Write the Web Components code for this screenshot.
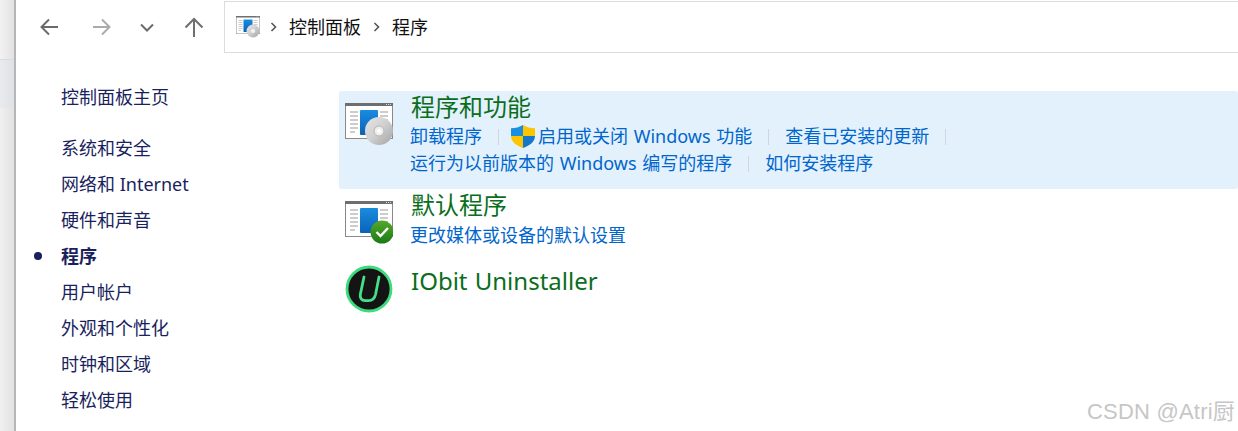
<!DOCTYPE html>
<html lang="zh">
<head>
<meta charset="utf-8">
<title>程序</title>
<style>
  html, body { margin: 0; height: 100%; background: #fff; overflow: hidden; }
  body { font-family: "Noto Sans", "Noto Sans CJK SC", sans-serif; }
</style>
</head>
<body>
<cp-window>
  <cp-toolbar slot="toolbar"></cp-toolbar>
  <cp-sidebar slot="sidebar">
    <cp-side-link class="home">控制面板主页</cp-side-link>
    <cp-side-link>系统和安全</cp-side-link>
    <cp-side-link>网络和 Internet</cp-side-link>
    <cp-side-link>硬件和声音</cp-side-link>
    <cp-side-link current>程序</cp-side-link>
    <cp-side-link>用户帐户</cp-side-link>
    <cp-side-link>外观和个性化</cp-side-link>
    <cp-side-link>时钟和区域</cp-side-link>
    <cp-side-link>轻松使用</cp-side-link>
  </cp-sidebar>
  <cp-task hot heading="程序和功能" style="--icon-top:12px;--pad-bottom:12px">
    <cp-icon slot="icon" name="disc"></cp-icon>
    <div class="links">
      <cp-task-link sep>卸载程序</cp-task-link>
      <cp-task-link sep shield>启用或关闭 Windows 功能</cp-task-link>
      <cp-task-link sep>查看已安装的更新</cp-task-link>
    </div>
    <div class="links">
      <cp-task-link sep>运行为以前版本的 Windows 编写的程序</cp-task-link>
      <cp-task-link>如何安装程序</cp-task-link>
    </div>
  </cp-task>
  <cp-task heading="默认程序" style="--icon-top:12px;--pad-bottom:15px;--links-top:1px">
    <cp-icon slot="icon" name="check"></cp-icon>
    <div class="links"><cp-task-link>更改媒体或设备的默认设置</cp-task-link></div>
  </cp-task>
  <cp-task heading="IObit Uninstaller" style="--icon-top:1px;--text-top:1px;--pad-bottom:16px">
    <cp-icon slot="icon" name="iobit"></cp-icon>
  </cp-task>
  <span slot="mark">CSDN @Atri厨</span>
</cp-window>

<script>
const WINDOW_ART = `
  <rect x="0.5" y="0.5" width="47" height="35" fill="#fff" stroke="#8a8a8a"/>
  <rect x="0" y="0" width="48" height="3" fill="#6e6e6e"/>
  <path d="M41 1.500h1M43 1.500h1M45 1.500h1" stroke="#ddd"/>
  <path d="M5 9h8M5 13h8M5 17h8M5 21h8M5 25h8M5 29h5M35 9h8M35 13h8M35 17h8M35 21h8" stroke="#9a9a9a"/>
  <rect x="15" y="7" width="18" height="25" rx="1" fill="url(#blue)"/>`;

const BLUE = `<linearGradient id="blue" x1="0" y1="0" x2="0" y2="1"><stop offset="0" stop-color="#1a8ce0"/><stop offset="1" stop-color="#0a62b8"/></linearGradient>`;
const CD = `<linearGradient id="cd" x1="0" y1="0" x2="1" y2="1"><stop offset="0" stop-color="#e6e6e6"/><stop offset="0.5" stop-color="#cfcfcf"/><stop offset="1" stop-color="#a2a2a2"/></linearGradient>`;

const ICONS = {
  disc: `<svg width="48" height="44" viewBox="0 0 48 44">
    <defs>${BLUE}${CD}</defs>
    ${WINDOW_ART}
    <circle cx="34" cy="28" r="14" fill="url(#cd)"/>
    <circle cx="34" cy="28" r="5" fill="#eee" stroke="#b5b5b5"/>
    <circle cx="34" cy="28" r="2" fill="#fff"/>
  </svg>`,
  check: `<svg width="48" height="44" viewBox="0 0 48 44">
    <defs>${BLUE}
      <linearGradient id="ok" x1="0" y1="0" x2="0" y2="1"><stop offset="0" stop-color="#55a82a"/><stop offset="1" stop-color="#1b7a14"/></linearGradient>
    </defs>
    ${WINDOW_ART}
    <circle cx="37" cy="31" r="11.500" fill="url(#ok)"/>
    <path d="M31.500 31l4 4 7.500-8" fill="none" stroke="#fff" stroke-width="2.400"/>
  </svg>`,
  iobit: `<svg width="48" height="48" viewBox="0 0 48 48">
    <circle cx="24" cy="24" r="22" fill="#141414" stroke="#3edb7e" stroke-width="2.800"/>
    <path d="M19 12l-3.600 17c-.9 4.400 1.200 6.600 4.800 6.600h3.400c3.600 0 6-2 7-6.400L34 12" fill="none" stroke="#45e088" stroke-width="2.800" stroke-linecap="round"/>
  </svg>`,
  shield: `<svg width="24" height="23" viewBox="1 0 22 23" preserveAspectRatio="none">
    <path d="M12 0C9 2 5 3.300 1 3.300V11h11z" fill="#1a8fe0"/>
    <path d="M12 0c3 2 7 3.300 11 3.300V11H12z" fill="#fdc400"/>
    <path d="M1 11c0 5.500 4.500 9.500 11 12V11z" fill="#fdc400"/>
    <path d="M23 11c0 5.500-4.500 9.500-11 12V11z" fill="#1378c9"/>
  </svg>`
};

class CpIcon extends HTMLElement {
  connectedCallback() {
    this.attachShadow({ mode: 'open' });
    this.shadowRoot.innerHTML = `
      <style>
        :host { display: block; line-height: 0; }
      </style>
      ${ICONS[this.getAttribute('name')]}`;
  }
}

class CpWindow extends HTMLElement {
  connectedCallback() {
    this.attachShadow({ mode: 'open' });
    this.shadowRoot.innerHTML = `
      <style>
        :host { display: grid; grid-template-columns: 16px 1fr; height: 431px; overflow: hidden; position: relative; }
        .edge { border-right: 2px solid #b6b6b6; box-sizing: border-box; background: linear-gradient(90deg, #f0f0f0, #e2e2e2); }
        .edge .a { height: 59px; background: linear-gradient(90deg, #f2f2f2, #e2e2e2); border-bottom: 1px solid #dcdcdc; }
        .edge .b { height: 48px; background: linear-gradient(90deg, #e9ebee, #dfe2e5); }
        .right { display: flex; flex-direction: column; min-width: 0; }
        .body { display: grid; grid-template-columns: 323px 1fr; }
        .tasks { padding-top: 38px; }
        .mark { position: absolute; right: 3px; bottom: 6px; font: 22px "Liberation Sans", "Noto Sans CJK SC", sans-serif; letter-spacing: .2px; color: #c6c6c6; }
      </style>
      <div class="edge"><div class="a"></div><div class="b"></div></div>
      <div class="right">
        <slot name="toolbar"></slot>
        <div class="body">
          <slot name="sidebar"></slot>
          <div class="tasks"><slot></slot></div>
        </div>
      </div>
      <div class="mark"><slot name="mark"></slot></div>`;
  }
}

class CpToolbar extends HTMLElement {
  connectedCallback() {
    this.attachShadow({ mode: 'open' });
    this.shadowRoot.innerHTML = `
      <style>
        :host { display: flex; align-items: stretch; height: 53px; }
        .btns { width: 208px; display: flex; align-items: center; padding: 1px 0 0 24px; box-sizing: border-box; }
        .btns svg { display: block; fill: none; stroke-width: 2; }
        .addr { flex: 1; margin-top: 1px; border: 1px solid #dcdcdc; border-right: 0; display: flex; align-items: center;
          padding-left: 11px; font-size: 18px; color: #111; }
        .addr span { margin-bottom: 2px; }
        .sep { margin: 0 11px 0 10px; }
        .sep.second { margin-left: 12px; }
      </style>
      <div class="btns">
        <svg width="18" height="18" viewBox="0 0 18 18" stroke="#6b6b6b"><path d="M18 9H1.500M9 1.500L1.500 9 9 16.500"/></svg>
        <svg width="18" height="18" viewBox="0 0 18 18" stroke="#ababab" style="margin-left:35px"><path d="M0 9h16.500M9 1.500L16.500 9 9 16.500"/></svg>
        <svg width="14" height="9" viewBox="0 0 14 9" stroke="#6b6b6b" style="margin-left:29px"><path d="M1 1.500l6 6 6-6"/></svg>
        <svg width="20" height="20" viewBox="0 0 20 20" stroke="#6f6f6f" style="margin-left:30px"><path d="M10 20V2M1.500 10.500L10 2l8.500 8.500"/></svg>
      </div>
      <div class="addr">
        <svg width="24" height="24" viewBox="0 0 48 44" style="display:block">
          <defs>${BLUE}${CD.replace('id="cd"', 'id="cd2"')}</defs>
          ${WINDOW_ART}
          <circle cx="34" cy="30" r="13" fill="url(#cd2)"/>
          <circle cx="34" cy="30" r="4" fill="#f4f4f4"/>
        </svg>
        <svg class="sep" width="8" height="12" viewBox="0 0 8 12" fill="none" stroke="#555" stroke-width="1.600"><path d="M1.500 2l4 4-4 4"/></svg>
        <span>控制面板</span>
        <svg class="sep second" width="8" height="12" viewBox="0 0 8 12" fill="none" stroke="#555" stroke-width="1.600"><path d="M1.500 2l4 4-4 4"/></svg>
        <span>程序</span>
      </div>`;
  }
}

class CpSidebar extends HTMLElement {
  connectedCallback() {
    this.attachShadow({ mode: 'open' });
    this.shadowRoot.innerHTML = `
      <style>
        :host { display: flex; flex-direction: column; padding: 26px 0 0 45px; }
        ::slotted(.home) { margin-bottom: 15px; }
      </style>
      <slot></slot>`;
  }
}

class CpSideLink extends HTMLElement {
  connectedCallback() {
    this.attachShadow({ mode: 'open' });
    this.shadowRoot.innerHTML = `
      <style>
        :host { display: block; position: relative; height: 36px; line-height: 36px; font-size: 18px; color: #1a1f5e; white-space: nowrap; }
        :host([current]) { font-weight: 700; }
        .dot { position: absolute; left: -27px; top: 14px; width: 8px; height: 8px; border-radius: 50%; background: #1a1f5e; }
      </style>
      ${this.hasAttribute('current') ? '<span class="dot"></span>' : ''}<slot></slot>`;
  }
}

class CpTask extends HTMLElement {
  connectedCallback() {
    this.attachShadow({ mode: 'open' });
    this.shadowRoot.innerHTML = `
      <style>
        :host { display: grid; grid-template-columns: 72px 1fr; word-spacing: 1px; }
        :host([hot]) { background: #e3f1fd; border-radius: 2px; }
        .icon { padding: var(--icon-top, 12px) 0 0 6px; }
        h2 { margin: 0 0 var(--links-top, 0); font-weight: 400; font-size: 24px; line-height: 32px; color: #0a6e1c; }
        .text { padding: var(--text-top, 0) 0 var(--pad-bottom, 11px); }
        ::slotted(.links) { display: flex; height: 27px; align-items: center; margin-left: -1px; }
      </style>
      <div class="icon"><slot name="icon"></slot></div>
      <div class="text">
        <h2>${this.getAttribute('heading')}</h2>
        <slot></slot>
      </div>`;
  }
}

class CpTaskLink extends HTMLElement {
  connectedCallback() {
    this.attachShadow({ mode: 'open' });
    this.shadowRoot.innerHTML = `
      <style>
        :host { display: inline-flex; align-items: center; font-size: 18px; line-height: 27px; color: #0066cc; white-space: nowrap; }
        .bar { width: 1px; height: 16px; background: #cfd6dc; margin: 0 16px; }
        .shield { margin: 0 3px 0 -4px; }
        .shield svg { display: block; }
      </style>
      ${this.hasAttribute('shield') ? `<span class="shield">${ICONS.shield}</span>` : ''}
      <slot></slot>
      ${this.hasAttribute('sep') ? '<span class="bar"></span>' : ''}`;
  }
}

customElements.define('cp-icon', CpIcon);
customElements.define('cp-window', CpWindow);
customElements.define('cp-toolbar', CpToolbar);
customElements.define('cp-sidebar', CpSidebar);
customElements.define('cp-side-link', CpSideLink);
customElements.define('cp-task', CpTask);
customElements.define('cp-task-link', CpTaskLink);
</script>
</body>
</html>
